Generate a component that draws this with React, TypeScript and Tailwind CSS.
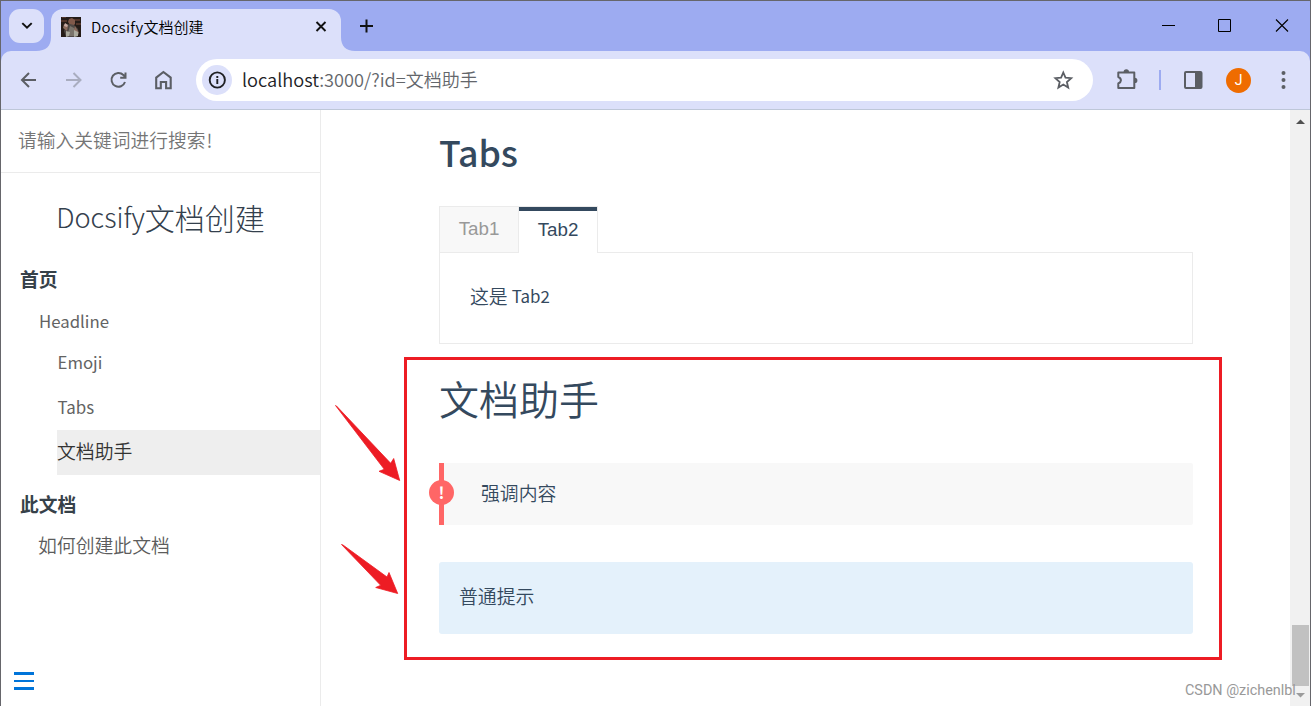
import React from "react";

function Arrow({ points }: { points: string }) {
  return <polygon points={points} fill="#ed1c24" stroke="#ed1c24" strokeWidth="0.8" strokeLinejoin="round" />;
}

function Favicon() {
  return (
    <svg className="h-5 w-5 shrink-0" viewBox="0 0 20 20">
      <rect width="20" height="20" fill="#251c18" />
      <path d="M0 3h6v2H0zM13 2h6v2h-6zM1 0h4v1H1zM15 6h5v2h-5z" fill="#51342a" />
      <path d="M8 2l3-1 3 2v4l-2 2-3-1-2-3z" fill="#80594a" />
      <path d="M5 8l4-1 4 1 4 4 1 5-3 3H5L3 14z" fill="#4f4845" />
      <path d="M9 9l4 2 4 8H6z" fill="#79736b" />
      <path d="M3 7l4 2-1 5-4-3zM14 9l4 7-2 1-3-4z" fill="#8b6a5c" />
      <path d="M4 6l3 2-1 2-3-1z" fill="#c5a9a2" />
      <path d="M5 14l4 1-1 4-3 1zM13 13l4 2v4l-4 1z" fill="#aaa99d" />
    </svg>
  );
}

function TabStrip() {
  return (
    <div className="flex h-[50px] shrink-0 items-end bg-[#9dabf1]">
      <button className="mb-2 ml-2 flex h-[34px] w-[35px] shrink-0 items-center justify-center rounded-[11px] bg-[#dce0fa]">
        <svg className="h-4 w-4" viewBox="0 0 16 16" fill="none" stroke="#111" strokeWidth="2">
          <path d="M3.300 5.100 8 9.700l4.700-4.600" />
        </svg>
      </button>
      <svg className="h-[42px] w-[7px] shrink-0 overflow-visible" viewBox="0 0 7 42"><path d="M-8 42C2 42 7 37 7 28h1v14z" fill="#dce0fa" /></svg>
      <div className="flex h-[42px] w-[290px] items-center rounded-t-[12px] bg-[#dce0fa] pb-[6px] pl-[10px] pr-3">
        <Favicon />
        <span className="ml-[10px] whitespace-nowrap pb-[2px] text-[15px] font-[350] text-black">
          <span className="tracking-[0.300px]">Docsify</span>文档创建
        </span>
        <svg className="ml-auto h-4 w-4" viewBox="0 0 16 16" stroke="#111" strokeWidth="1.900"><path d="m3.500 3 9 9m0-9-9 9" /></svg>
      </div>
      <svg className="h-[14px] w-[14px] shrink-0" viewBox="0 0 14 14"><path d="M0 0C0 9 5 14 14 14H0z" fill="#dce0fa" /></svg>
      <svg className="mb-[17px] ml-[3px] h-4 w-4" viewBox="0 0 16 16" stroke="#111" strokeWidth="2"><path d="M8.500 1.500v13M2 8h13" /></svg>
      <div className="mb-[17px] ml-auto mr-5 flex items-center gap-[41px]">
        <svg className="h-4 w-4" viewBox="0 0 16 16" stroke="#000"><path d="M2 7.500h13" /></svg>
        <svg className="h-4 w-4" viewBox="0 0 16 16" fill="none" stroke="#000"><path d="M1.500 1.500h12v12h-12z" /></svg>
        <svg className="h-4 w-4" viewBox="0 0 16 16" stroke="#000" strokeWidth="1.100"><path d="m2 1.500 12 12m0-12-12 12" /></svg>
      </div>
    </div>
  );
}

function Toolbar() {
  return (
    <div className="bg-[#9dabf1]">
      <div className="flex h-[59px] items-center rounded-t-[10px] border-b border-[#bec7d8] bg-[#dce0fa] pl-4">
        <svg className="h-6 w-6" viewBox="0 0 24 24" fill="none" stroke="#5b5e64" strokeWidth="2"><path d="M19 12H5.500M12 5l-7 7 7 7" /></svg>
        <svg className="ml-5 h-6 w-6" viewBox="0 0 24 24" fill="none" stroke="#a9adbf" strokeWidth="2"><path d="M5 12h13.500M12.500 5l7 7-7 7" /></svg>
        <svg className="ml-[21px] h-6 w-6" viewBox="0 0 24 24" fill="none" stroke="#5b5e64" strokeWidth="2"><path d="M19 14a6.900 6.900 0 1 1-1.600-7l2 2M19.500 4.500v5.300h-5.300" /></svg>
        <svg className="ml-[21px] h-6 w-6" viewBox="0 0 24 24" fill="none" stroke="#5b5e64" strokeWidth="2.100"><path d="M5.200 9.600 12.400 4l7.300 5.600v10.600h-4.600V14H9.800v6.200H5.200z" /></svg>
        <div className="ml-[21px] flex h-[42px] w-[897px] items-center rounded-full bg-white pl-[6px] pr-[19px]">
          <div className="flex h-[30px] w-[30px] items-center justify-center rounded-full bg-[#dce0fa]">
            <svg className="h-5 w-5" viewBox="0 0 20 20" fill="none" stroke="#1f2023" strokeWidth="1.900"><circle cx="10.300" cy="10" r="7.600" /><path d="M10.300 9v5M10.300 6v2" /></svg>
          </div>
          <span className="ml-[10px] whitespace-nowrap pb-[2px] text-[18.200px] font-[350] text-[#63666b]">
            <span className="text-[#202124]">localhost</span>:3000/?id=<span className="text-[18px]">文档助手</span>
          </span>
          <svg className="ml-auto h-[22px] w-[22px]" viewBox="0 0 22 22" fill="none" stroke="#5b5e64" strokeWidth="1.800"><path d="m11.300 3.500 2.200 5.200 5.700.5-4.300 3.800 1.300 5.600-4.900-3-4.900 3 1.300-5.600-4.300-3.800 5.700-.5z" /></svg>
        </div>
        <svg className="ml-[22px] h-6 w-6" viewBox="0 0 24 24" fill="none" stroke="#5b5e64" strokeWidth="2"><path d="M3.300 4.500h16v15.500h-16v-4.500c1.800-.8 2.600-1.600 2.600-3S5.100 9.700 3.300 9z" strokeLinejoin="round" /><path d="M8.600 4a2.700 2.700 0 0 1 5.400 0zM19.800 9.800a2.600 2.600 0 0 1 0 5.200z" fill="#5b5e64" stroke="none" /></svg>
        <div className="ml-5 h-5 w-[2px] bg-[#9dabf1]" />
        <svg className="ml-5 h-6 w-6" viewBox="0 0 24 24"><rect x="4" y="4" width="16.500" height="16" fill="none" stroke="#5b5e64" strokeWidth="2" rx="1" /><path d="M14 4h6.500v16H14z" fill="#5b5e64" /></svg>
        <div className='ml-[21px] flex h-[25px] w-[25px] items-center justify-center rounded-full bg-[#ef6c00] font-["Roboto",sans-serif] text-[14px] text-white'>J</div>
        <svg className="ml-[20px] h-6 w-6" viewBox="0 0 24 24" fill="#5b5e64"><circle cx="12.500" cy="5" r="2" /><circle cx="12.500" cy="12" r="2" /><circle cx="12.500" cy="19" r="2" /></svg>
      </div>
    </div>
  );
}

function Sidebar() {
  return (
    <aside className="flex w-[320px] shrink-0 flex-col border-r border-[#ebebeb] text-[18.850px] text-[#505d6b]">
      <div className="flex h-[63px] items-center border-b border-[#ebebeb] pb-[2px] pl-[17px] text-[18.750px] font-[350] text-[#757575]">请输入关键词进行搜索<span className="ml-px">!</span></div>
      <h1 className="flex h-[92px] items-center justify-center whitespace-nowrap pb-[5px] font-light text-[#34404d]">
        <span className="text-[27.200px]">Docsify</span><span className="text-[30px]">文档创建</span>
      </h1>
      <div className="flex h-[30px] items-center pb-[2px] pl-[19px] text-[18.750px] font-bold text-[#364149]">首页</div>
      <div className="mt-[6px] flex h-[42px] items-center pb-[2px] pl-[38px] text-[16.800px] text-[#636363]">Headline</div>
      <div className="flex h-10 items-center pb-[2px] pl-[56.500px] text-[16.800px] text-[#636363]">Emoji</div>
      <div className="mt-[2px] flex h-[45px] items-center pl-[56.500px] text-[16.900px] text-[#636363]">Tabs</div>
      <div className="ml-[56px] flex h-[45px] items-center bg-[#eee] pb-[2px] font-[350] text-[#333]">文档助手</div>
      <div className="mt-[9px] flex h-[42px] items-center pb-[2px] pl-[19px] text-[18.750px] font-bold text-[#364149]">此文档</div>
      <div className="flex h-10 items-center pb-[2px] pl-[37px] font-[350] text-[#5c5c5c]">如何创建此文档</div>
      <div className="mb-4 ml-[13px] mt-auto flex h-[18px] w-5 flex-col justify-between">
        <div className="h-[3px] bg-[#0074d9]" />
        <div className="h-[2px] bg-[#0074d9]" />
        <div className="h-[3px] bg-[#0074d9]" />
      </div>
    </aside>
  );
}

function Content() {
  return (
    <main className="flex min-w-0 flex-1 flex-col pl-[118px] text-[18.850px] text-[#34495e]">
      <div className="w-[754px]">
        <h2 className="flex h-[96px] items-center pb-3 text-[35.700px] font-medium">Tabs</h2>
        <div className='flex h-[46px] font-["Liberation_Sans",sans-serif] text-[18.750px]'>
          <div className="flex w-[79px] items-center justify-center border-l border-t border-[#ebebeb] bg-[#f8f8f8] pb-px text-[#999]">Tab1</div>
          <div className="z-10 -mb-px flex w-[80px] items-center justify-center border-x border-t border-[#ebebeb] bg-white">
            <div className="flex h-full w-full items-center justify-center border-t-4 border-[#34495e] pb-[3px]">Tab2</div>
          </div>
        </div>
        <div className="flex h-[92px] items-center border border-[#ebebeb] pb-[4px] pl-[30px]">
          <span className="font-[350]">这是</span><span className="ml-1 text-[16.900px]">Tab2</span>
        </div>
        <h2 className="flex h-[119px] items-center pb-[11px] text-[40px] font-[350]">文档助手</h2>
        <div className="relative flex h-[62px] items-center rounded-r-[2px] border-l-[5px] border-[#f66] bg-[#f8f8f8] pb-[2px] pl-[37px] font-[350]">
          <span className="absolute -left-[15px] top-[17px] flex h-[25px] w-[25px] items-center justify-center rounded-full bg-[#f66] pb-[2px] text-[16px] font-bold text-white">!</span>
          强调内容
        </div>
        <div className="mt-[37px] flex h-[72px] items-center rounded-[3px] bg-[#e4f1fb] pb-[3px] pl-5 font-[350]">普通提示</div>
      </div>
    </main>
  );
}

function Scrollbar() {
  return (
    <div className="flex w-5 shrink-0 flex-col items-center bg-[#f1f1f1]">
      <svg className="mt-1 h-4 w-4" viewBox="0 0 16 16"><path d="M4 10h9L8.500 5.500z" fill="#505050" /></svg>
      <div className="mt-auto h-[61px] w-[17px] bg-[#c1c1c1]" />
      <svg className="mb-px h-[19px] w-4" viewBox="0 0 16 19"><path d="M4 7h9l-4.500 4.500z" fill="#9b9b9b" /></svg>
    </div>
  );
}

export default function App() {
  return (
    <div className='relative flex h-[706px] w-[1311px] flex-col overflow-hidden border-x border-t border-[#66666b] bg-white font-["Noto_Sans_CJK_SC",sans-serif] leading-none'>
      <TabStrip />
      <Toolbar />
      <div className="flex min-h-0 flex-1">
        <Sidebar />
        <Content />
        <Scrollbar />
      </div>
      <div className="absolute left-[403px] top-[356px] h-[303px] w-[818px] border-[3px] border-[#ed1c24]" />
      <svg className="absolute left-[329px] top-[399px] h-[200px] w-[80px]" viewBox="330 400 80 200">
        <Arrow points="335.500,405.500 336.500,406 390.700,463.300 393.700,458.500 399.700,480.500 379,471.300 384.300,469.300" />
        <Arrow points="341.500,544.500 343,545 387,577 389,572.500 397.700,593.500 375.700,587.500 380.700,585.300" />
      </svg>
      <div className='absolute left-[1184px] top-[683px] whitespace-nowrap font-["Roboto",sans-serif] text-[14.400px] text-[#999]'>CSDN @zichenlbl</div>
    </div>
  );
}
